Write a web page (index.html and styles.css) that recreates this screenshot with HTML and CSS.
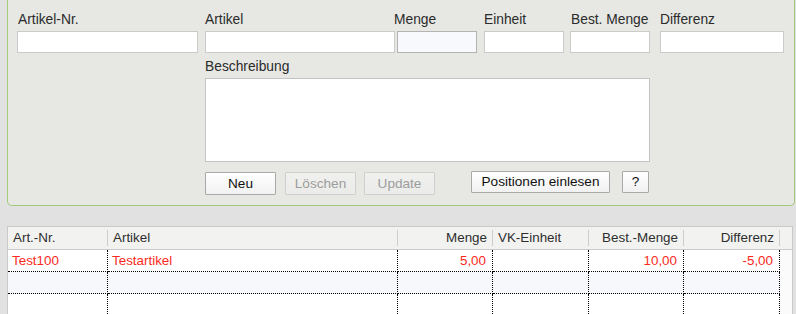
FILE: index.html
```html
<!DOCTYPE html>
<html lang="de">
<head>
<meta charset="utf-8">
<title>Positionen</title>
<link rel="stylesheet" href="styles.css">
</head>
<body>
<div class="panel">
  <div class="fields">
    <div class="field f-artnr"><label>Artikel-Nr.</label><div class="input"></div></div>
    <div class="field f-artikel"><label>Artikel</label><div class="input"></div></div>
    <div class="field f-menge"><label class="lbl-menge">Menge</label><div class="input focus"></div></div>
    <div class="field f-einheit"><label>Einheit</label><div class="input"></div></div>
    <div class="field f-best"><label class="lbl-best">Best. Menge</label><div class="input"></div></div>
    <div class="field f-diff"><label>Differenz</label><div class="input"></div></div>
  </div>
  <div class="desc">
    <label>Beschreibung</label>
    <div class="textarea"></div>
  </div>
  <div class="buttons">
    <button class="btn b-neu">Neu</button>
    <button class="btn b-del" disabled>Löschen</button>
    <button class="btn b-upd" disabled>Update</button>
    <button class="btn b-pos">Positionen einlesen</button>
    <button class="btn b-help">?</button>
  </div>
</div>

<div class="grid">
  <div class="hd">Art.-Nr.</div>
  <div class="hd">Artikel</div>
  <div class="hd r">Menge</div>
  <div class="hd">VK-Einheit</div>
  <div class="hd r">Best.-Menge</div>
  <div class="hd r">Differenz</div>
  <div class="hd last"></div>

  <div class="c red">Test100</div>
  <div class="c red">Testartikel</div>
  <div class="c red r">5,00</div>
  <div class="c"></div>
  <div class="c red r">10,00</div>
  <div class="c red r">-5,00</div>
  <div class="c last"></div>

  <div class="c alt"></div>
  <div class="c alt"></div>
  <div class="c alt"></div>
  <div class="c alt"></div>
  <div class="c alt"></div>
  <div class="c alt"></div>
  <div class="c last"></div>

  <div class="c"></div>
  <div class="c"></div>
  <div class="c"></div>
  <div class="c"></div>
  <div class="c"></div>
  <div class="c"></div>
  <div class="c last"></div>
</div>
</body>
</html>
```

FILE: styles.css
```css
html, body {
  margin: 0;
  padding: 0;
}
body {
  background: #e1e1e1;
  font-family: "Liberation Sans", Arial, sans-serif;
  font-size: 13.4px;
  color: #2b2b2b;
  width: 796px;
  height: 314px;
  overflow: hidden;
}
.panel {
  margin-left: 7px;
  width: 777px;
  background: #e7e8e4;
  border: 1px solid #a3c97c;
  border-top: none;
  border-radius: 0 0 5px 5px;
  padding: 12px 0 10px 9px;
}
label {
  display: block;
  line-height: 16px;
  height: 16px;
  margin-bottom: 3px;
  font-size: 13.8px;
  color: #2b2b2b;
  white-space: nowrap;
}
.fields {
  display: flex;
}
.field {
  flex: none;
}
.input {
  height: 20px;
  background: #fff;
  border: 1px solid #cbcbcb;
}
.input.focus {
  background: #f7f9fd;
  border-color: #b3b3b3;
}
.f-artnr { width: 181px; margin-right: 7px; }
.f-artnr label { padding-left: 1px; }
.f-artikel { width: 190px; margin-right: 2px; }
.f-menge { width: 80px; margin-right: 7px; }
.lbl-menge { margin-left: -3px; }
.f-einheit { width: 80px; margin-right: 6px; }
.f-best { width: 80px; margin-right: 10px; }
.lbl-best { margin-left: 1px; }
.f-diff { width: 124px; }

.desc {
  margin-left: 188px;
  margin-top: 6px;
  width: 445px;
}
.textarea {
  height: 82px;
  background: #fff;
  border: 1px solid #c4c4c4;
}

.buttons {
  display: flex;
  align-items: flex-start;
  margin-left: 188px;
  margin-top: 10px;
}
.btn {
  font-family: "Liberation Sans", Arial, sans-serif;
  font-size: 13.6px;
  color: #111;
  height: 23px;
  padding: 0;
  margin: 0;
  border: 1px solid #a9a9a9;
  border-radius: 1px;
  background: linear-gradient(#ffffff, #f1f1f1);
  line-height: 21px;
  flex: none;
}
.btn:disabled {
  color: #9c9c9c;
  border-color: #cfcfcf;
  background: linear-gradient(#f0f1ee, #ebece9);
}
.b-neu { width: 71px; margin-right: 9px; }
.b-del { width: 71px; margin-right: 8px; }
.b-upd { width: 71px; margin-right: 36px; }
.b-pos { width: 139px; height: 22px; line-height: 20px; margin-top: -1px; margin-right: 12px; }
.b-help { width: 27px; height: 22px; line-height: 20px; margin-top: -1px; }

.grid {
  margin-top: 20px;
  margin-left: 7px;
  width: 784px;
  border: 1px solid #cacaca;
  border-bottom: none;
  background: #fff;
  display: grid;
  grid-template-columns: 100px 290px 95px 96px 95px 96px 12px;
  grid-auto-rows: 22px;
  grid-template-rows: 23px;
}
.hd {
  background: #f2f3f1 linear-gradient(#cdcdcd, #cdcdcd) no-repeat right center / 1px 16px;
  border-bottom: 1px solid #cbcbcb;
  line-height: 22px;
  padding: 0 6px 0 5px;
  color: #2e2e2e;
  white-space: nowrap;
}
.hd.r { text-align: right; padding-right: 6px; }
.hd.last { background: #f2f3f1; }
.c {
  border-right: 1px dotted #000;
  border-bottom: 1px dotted #000;
  line-height: 21px;
  padding: 0 4px 0 4px;
  white-space: nowrap;
}
.c.r { text-align: right; padding-right: 6px; }
.c.alt { background: #f6f8fc; }
.c.last {
  border-right: none;
  border-bottom: none;
  background: #fbfbfb;
}
.red { color: #fb2a1c; }
```
